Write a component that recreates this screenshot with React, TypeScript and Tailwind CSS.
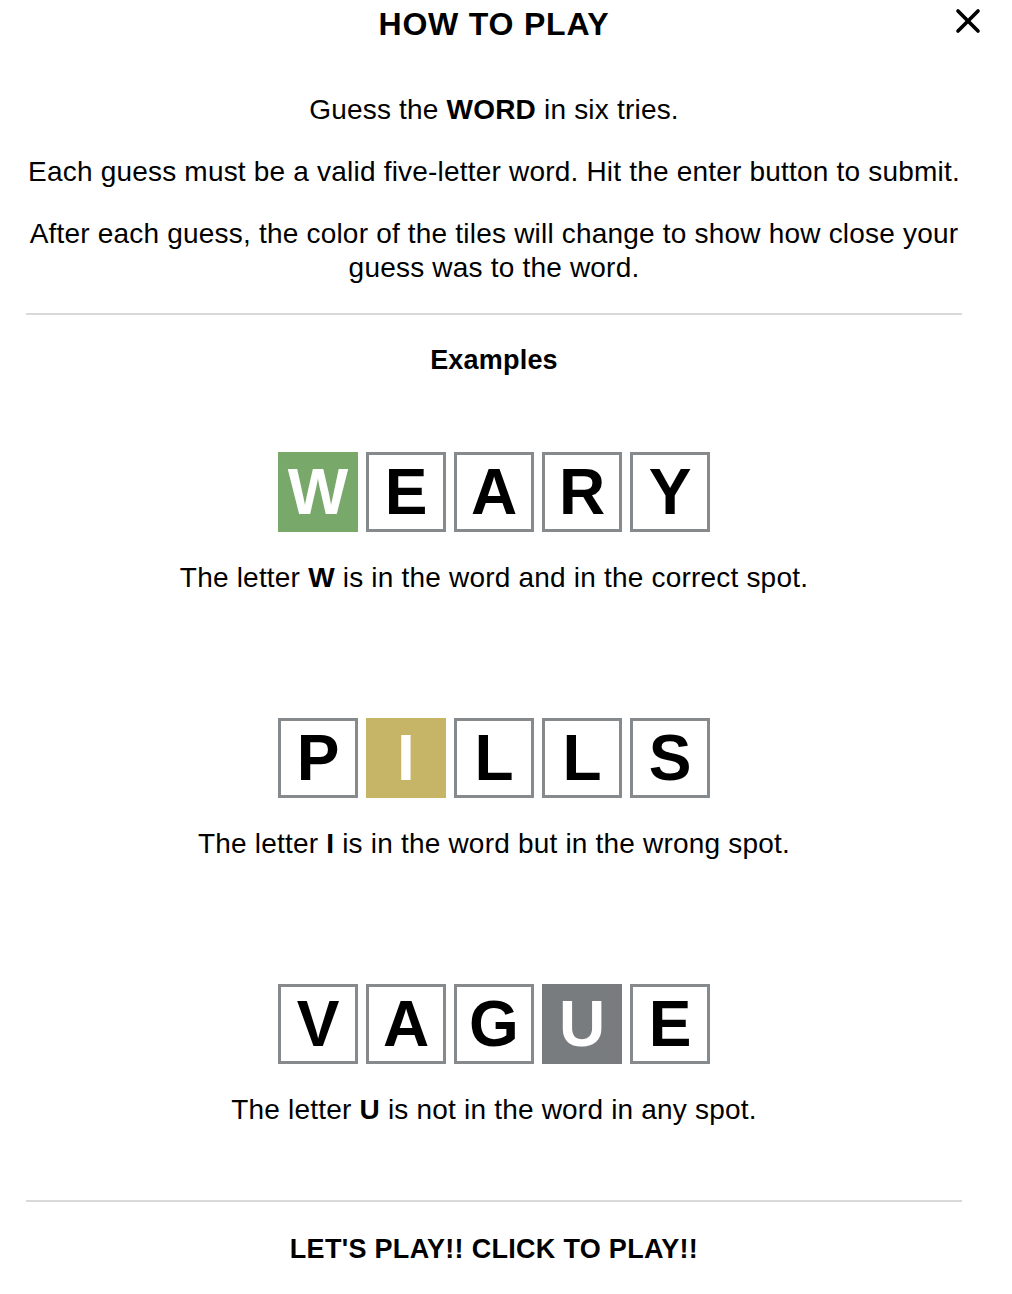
import { X } from 'lucide-react'

type Tile = { letter: string; state?: 'correct' | 'present' | 'absent' }

const examples: { tiles: Tile[]; letter: string; rest: string; lead: string }[] = [
  {
    tiles: [
      { letter: 'W', state: 'correct' },
      { letter: 'E' },
      { letter: 'A' },
      { letter: 'R' },
      { letter: 'Y' },
    ],
    lead: 'The letter ',
    letter: 'W',
    rest: ' is in the word and in the correct spot.',
  },
  {
    tiles: [
      { letter: 'P' },
      { letter: 'I', state: 'present' },
      { letter: 'L' },
      { letter: 'L' },
      { letter: 'S' },
    ],
    lead: 'The letter ',
    letter: 'I',
    rest: ' is in the word but in the wrong spot.',
  },
  {
    tiles: [
      { letter: 'V' },
      { letter: 'A' },
      { letter: 'G' },
      { letter: 'U', state: 'absent' },
      { letter: 'E' },
    ],
    lead: 'The letter ',
    letter: 'U',
    rest: ' is not in the word in any spot.',
  },
]

function TileBox({ tile }: { tile: Tile }) {
  let cls = 'border-[3px] border-[#878a8c] bg-white text-black'
  if (tile.state === 'correct') cls = 'bg-[#79a86b] text-white'
  if (tile.state === 'present') cls = 'bg-[#c6b566] text-white'
  if (tile.state === 'absent') cls = 'bg-[#787c7e] text-white'
  return (
    <div className={`w-[80px] h-[80px] flex items-center justify-center text-[64px] font-bold leading-none ${cls}`}>
      {tile.letter}
    </div>
  )
}

export default function App() {
  return (
    <div className="min-h-[1294px] bg-white text-black font-['Liberation_Sans',Arial,sans-serif]">
      <div className="relative w-[988px] px-[26px]">
        <h1 className="text-center text-[32px] font-bold leading-[48px] tracking-[0.8px]">HOW TO PLAY</h1>
        <button className="absolute right-[0px] top-[1px] p-0" aria-label="Close">
          <X className="w-[40px] h-[40px]" strokeWidth={2.2} />
        </button>

        <div className="mt-[45px] text-center text-[28px] leading-[34px] tracking-[0.2px] space-y-[28px]">
          <p>
            Guess the <strong>WORD</strong> in six tries.
          </p>
          <p>Each guess must be a valid five-letter word. Hit the enter button to submit.</p>
          <p>After each guess, the color of the tiles will change to show how close your guess was to the word.</p>
        </div>

        <hr className="mt-[28px] border-t-2 border-[#d9d9dc]" />

        <h2 className="mt-[28px] text-center text-[27px] font-bold leading-[34px] tracking-[0.2px]">Examples</h2>

        <div className="mt-[75px] flex flex-col items-center">
          {examples.map((ex, i) => (
            <div key={i} className={`flex flex-col items-center ${i > 0 ? 'mt-[123px]' : ''}`}>
              <div className="flex gap-2">
                {ex.tiles.map((t, j) => (
                  <TileBox key={j} tile={t} />
                ))}
              </div>
              <p className="mt-[29px] text-[28px] leading-[34px] tracking-[0.2px]">
                {ex.lead}
                <strong>{ex.letter}</strong>
                {ex.rest}
              </p>
            </div>
          ))}
        </div>

        <hr className="mt-[73px] border-t-2 border-[#d9d9dc]" />

        <button className="mt-[30px] block w-full text-center text-[27px] font-bold leading-[34px] tracking-[0.3px]">
          LET'S PLAY!! CLICK TO PLAY!!
        </button>
      </div>
    </div>
  )
}
